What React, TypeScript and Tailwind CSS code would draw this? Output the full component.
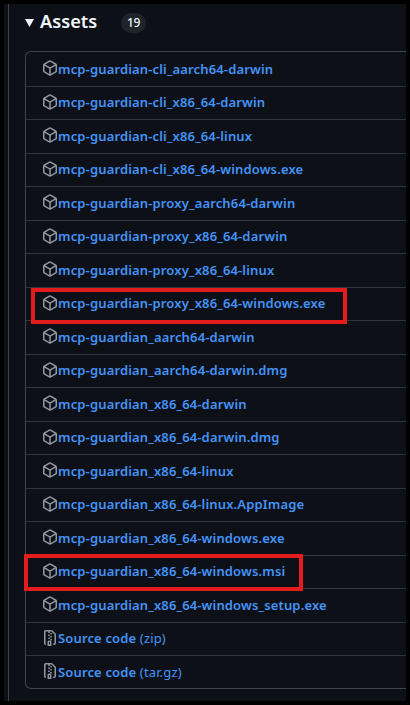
const assets: { name: string; kind?: string }[] = [
  { name: 'mcp-guardian-cli_aarch64-darwin' },
  { name: 'mcp-guardian-cli_x86_64-darwin' },
  { name: 'mcp-guardian-cli_x86_64-linux' },
  { name: 'mcp-guardian-cli_x86_64-windows.exe' },
  { name: 'mcp-guardian-proxy_aarch64-darwin' },
  { name: 'mcp-guardian-proxy_x86_64-darwin' },
  { name: 'mcp-guardian-proxy_x86_64-linux' },
  { name: 'mcp-guardian-proxy_x86_64-windows.exe' },
  { name: 'mcp-guardian_aarch64-darwin' },
  { name: 'mcp-guardian_aarch64-darwin.dmg' },
  { name: 'mcp-guardian_x86_64-darwin' },
  { name: 'mcp-guardian_x86_64-darwin.dmg' },
  { name: 'mcp-guardian_x86_64-linux' },
  { name: 'mcp-guardian_x86_64-linux.AppImage' },
  { name: 'mcp-guardian_x86_64-windows.exe' },
  { name: 'mcp-guardian_x86_64-windows.msi' },
  { name: 'mcp-guardian_x86_64-windows_setup.exe' },
  { name: 'Source code', kind: '(zip)' },
  { name: 'Source code', kind: '(tar.gz)' },
];

const packagePath =
  'm8.878.392 5.25 3.045c.54.314.872.89.872 1.514v6.098a1.75 1.75 0 0 1-.872 1.514l-5.25 3.045a1.75 1.75 0 0 1-1.756 0l-5.25-3.045A1.75 1.75 0 0 1 1 11.049V4.951c0-.624.332-1.201.872-1.514L7.122.392a1.75 1.75 0 0 1 1.756 0ZM7.875 1.69l-4.63 2.685L8 7.133l4.755-2.758-4.63-2.685a.248.248 0 0 0-.25 0ZM2.5 5.677v5.372c0 .09.047.171.125.216l4.625 2.683V8.432Zm6.25 8.271 4.625-2.683a.25.25 0 0 0 .125-.216V5.677L8.75 8.432Z';
const zipPath =
  'M3.5 1.75v11.5c0 .09.048.173.126.217a.75.75 0 0 1-.752 1.298A1.748 1.748 0 0 1 2 13.25V1.75C2 .784 2.784 0 3.75 0h5.586c.464 0 .909.185 1.237.513l2.914 2.914c.329.328.513.773.513 1.237v8.586A1.75 1.75 0 0 1 12.25 15h-.5a.75.75 0 0 1 0-1.5h.5a.25.25 0 0 0 .25-.25V4.664a.25.25 0 0 0-.073-.177L9.513 1.573a.25.25 0 0 0-.177-.073H7.25a.75.75 0 0 1 0 1.5h-.5a.75.75 0 0 1 0-1.5h-3a.25.25 0 0 0-.25.25Zm3.75 8.75h.5c.966 0 1.75.784 1.75 1.75v3a.75.75 0 0 1-.75.75h-2.5a.75.75 0 0 1-.75-.75v-3c0-.966.784-1.75 1.75-1.75ZM6 5.25a.75.75 0 0 1 .75-.75h.5a.75.75 0 0 1 0 1.5h-.5A.75.75 0 0 1 6 5.25Zm.75 2.25h.5a.75.75 0 0 1 0 1.5h-.5a.75.75 0 0 1 0-1.5ZM8 6.75A.75.75 0 0 1 8.75 6h.5a.75.75 0 0 1 0 1.5h-.5A.75.75 0 0 1 8 6.75ZM8.75 3h.5a.75.75 0 0 1 0 1.5h-.5a.75.75 0 0 1 0-1.5ZM8 9.75A.75.75 0 0 1 8.75 9h.5a.75.75 0 0 1 0 1.5h-.5A.75.75 0 0 1 8 9.75Zm-1 2.5v2.25h1v-2.25a.25.25 0 0 0-.25-.25h-.5a.25.25 0 0 0-.25.25Z';

export default function App() {
  return (
    <div className="relative h-[705px] w-[410px] overflow-hidden border-4 border-black bg-[#0d1117] pl-1 font-['Noto_Sans',sans-serif]">
      <main className="h-full border-l border-[#3d444d] pl-4">
        <header className="flex h-[47px] items-start">
          <svg className="mt-[15px] h-2 w-[9px] fill-[#f0f6fc]" viewBox="0 0 9 8">
            <path d="M0 0h9L4.5 8Z" />
          </svg>
          <h1 className="ml-1.5 w-[81px] text-[18.2px] leading-[35px] font-semibold text-[#f0f6fc]">Assets</h1>
          <span className="mt-[9px] flex h-5 w-[25px] items-center justify-center rounded-full bg-[#1f242b] text-xs font-medium tracking-[-0.3px] text-[#f0f6fc]">
            19
          </span>
        </header>
        <ul className="h-[638px] rounded-l-md border-y border-l border-[#3d444d]">
          {assets.map((asset, i) => (
            <li
              key={i}
              className="flex h-[33.5px] items-center border-t border-[#2f363e] pb-[0.6px] pl-4 first:border-t-0 first:pb-0"
            >
              <svg className="mb-px h-4 w-4 shrink-0 fill-[#9198a1]" viewBox="0 0 16 16">
                <path d={asset.kind ? zipPath : packagePath} />
              </svg>
              <a className="text-[13px] leading-5 tracking-[0.15px] whitespace-nowrap text-[#4493f8]">
                <span className="font-semibold">{asset.name}</span>
                {asset.kind && <span> {asset.kind}</span>}
              </a>
            </li>
          ))}
        </ul>
      </main>
      <div className="absolute top-[284px] left-[27px] h-9 w-[316px] border-4 border-[#e51c1c]" />
      <div className="absolute top-[550px] left-5 h-[37px] w-[279px] border-4 border-[#e51c1c]" />
    </div>
  );
}
